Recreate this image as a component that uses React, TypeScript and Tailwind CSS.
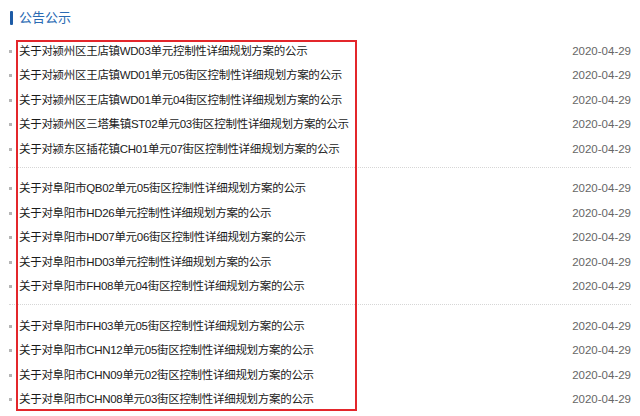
import React from "react";

const groups: string[][] = [
  [
    "关于对颍州区王店镇WD03单元控制性详细规划方案的公示",
    "关于对颍州区王店镇WD01单元05街区控制性详细规划方案的公示",
    "关于对颍州区王店镇WD01单元04街区控制性详细规划方案的公示",
    "关于对颍州区三塔集镇ST02单元03街区控制性详细规划方案的公示",
    "关于对颍东区插花镇CH01单元07街区控制性详细规划方案的公示",
  ],
  [
    "关于对阜阳市QB02单元05街区控制性详细规划方案的公示",
    "关于对阜阳市HD26单元控制性详细规划方案的公示",
    "关于对阜阳市HD07单元06街区控制性详细规划方案的公示",
    "关于对阜阳市HD03单元控制性详细规划方案的公示",
    "关于对阜阳市FH08单元04街区控制性详细规划方案的公示",
  ],
  [
    "关于对阜阳市FH03单元05街区控制性详细规划方案的公示",
    "关于对阜阳市CHN12单元05街区控制性详细规划方案的公示",
    "关于对阜阳市CHN09单元02街区控制性详细规划方案的公示",
    "关于对阜阳市CHN08单元03街区控制性详细规划方案的公示",
  ],
];

export default function App() {
  return (
    <div
      className="relative w-[640px] h-[416px] overflow-hidden bg-white"
      style={{ fontFamily: '"Liberation Sans", "Noto Sans CJK SC", sans-serif' }}
    >
      <div className="flex h-[35px] items-center pl-[10px]">
        <div className="h-[14px] w-[3px] rounded-[1px] bg-[#1d5ba6]" />
        <div className="ml-[6px] text-[13px] leading-none text-[#2a6ab3]">公告公示</div>
      </div>
      <div className="pl-[9px] pr-[9px] pt-[4px]">
        {groups.map((g, gi) => (
          <div
            key={gi}
            className={
              gi < groups.length - 1
                ? "border-b border-dotted border-[#d6d6d6] pb-[5px] mb-[9px]"
                : ""
            }
          >
            {g.map((t, i) => (
              <div key={i} className="flex h-[24.5px] items-center">
                <div className="h-[3px] w-[3px] bg-[#b5b5b5]" />
                <div className="ml-[7px] flex-1 text-[11.5px] tracking-[-0.3px] text-[#1a1a1a]">{t}</div>
                <div className="text-[11.5px] text-[#666]">2020-04-29</div>
              </div>
            ))}
          </div>
        ))}
      </div>
      <div className="absolute left-[16px] top-[40px] h-[371px] w-[341px] border-2 border-[#e3262b]" />
    </div>
  );
}
